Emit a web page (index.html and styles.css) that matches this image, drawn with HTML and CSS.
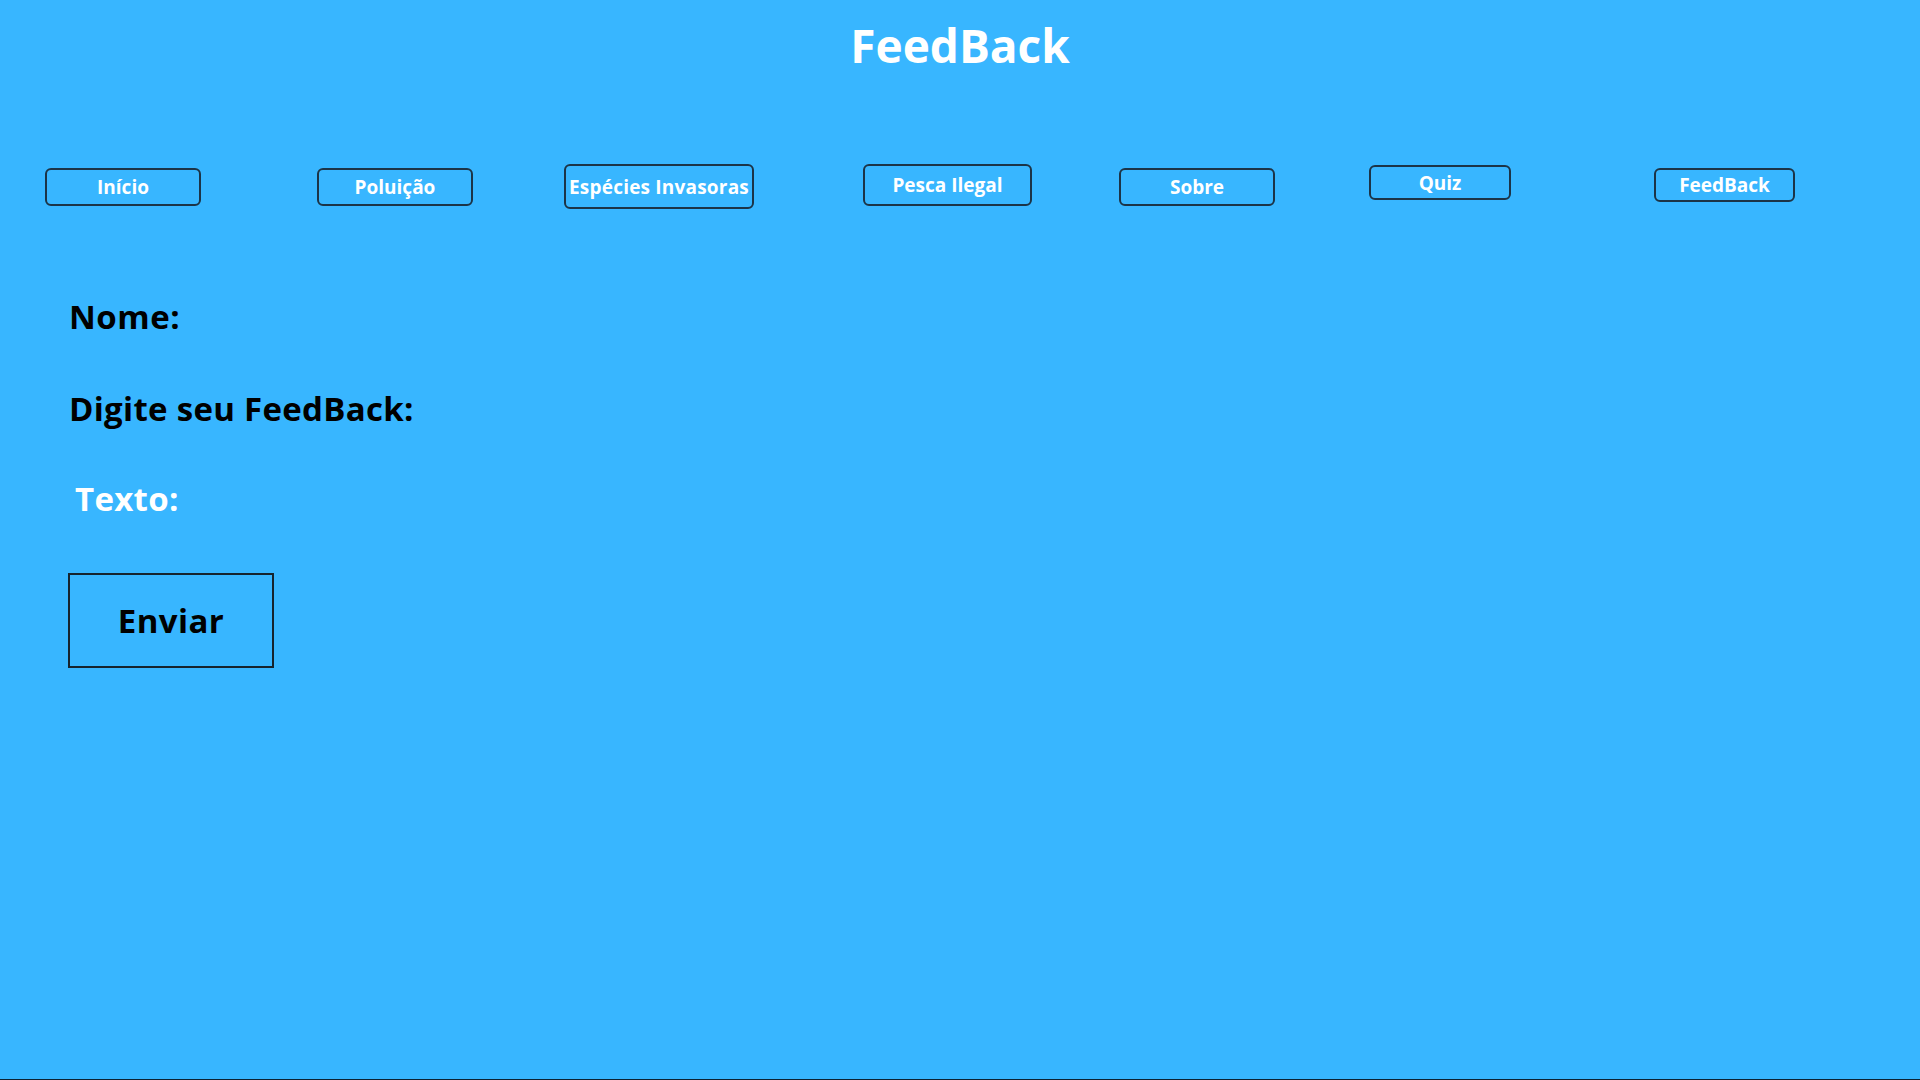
FILE: index.html
```html
<!DOCTYPE html>
<html lang="pt">
<head>
<meta charset="utf-8">
<title>FeedBack</title>
<link rel="stylesheet" href="styles.css">
</head>
<body>
<div class="page">
  <h1 class="title">FeedBack</h1>
  <nav class="nav">
    <a class="nav-btn b-inicio">Início</a>
    <a class="nav-btn b-poluicao">Poluição</a>
    <a class="nav-btn b-especies">Espécies Invasoras</a>
    <a class="nav-btn b-pesca">Pesca Ilegal</a>
    <a class="nav-btn b-sobre">Sobre</a>
    <a class="nav-btn b-quiz">Quiz</a>
    <a class="nav-btn b-feedback">FeedBack</a>
  </nav>
  <form class="form">
    <div class="label l-nome">Nome:</div>
    <div class="label l-digite">Digite seu FeedBack:</div>
    <div class="label l-texto">Texto:</div>
    <button type="button" class="send">Enviar</button>
  </form>
</div>
</body>
</html>
```
FILE: styles.css
```css
* { box-sizing: border-box; }
html, body { margin: 0; padding: 0; }
body {
  background: #38b6ff;
  font-family: "Open Sans", "Liberation Sans", sans-serif;
  font-weight: 700;
}
.page {
  width: 1920px;
  height: 1080px;
  border-bottom: 1px solid #0b2233;
  overflow: hidden;
}
.title {
  margin: 12px 0 0;
  font-size: 46px;
  line-height: 66px;
  font-weight: 700;
  color: #ffffff;
  text-align: center;
}
.nav {
  display: flex;
  align-items: flex-start;
  margin-top: 86px;
  padding-left: 45px;
}
.nav-btn {
  display: flex;
  align-items: center;
  justify-content: center;
  border: 2px solid #1c3447;
  border-radius: 6px;
  color: #ffffff;
  font-size: 19px;
  white-space: nowrap;
}
.b-inicio { width: 156px; height: 38px; margin-top: 4px; }
.b-poluicao { width: 156px; height: 38px; margin-top: 4px; margin-left: 116px; }
.b-especies { width: 190px; height: 45px; margin-left: 91px; letter-spacing: 0.2px; }
.b-pesca { width: 169px; height: 42px; margin-left: 109px; }
.b-sobre { width: 156px; height: 38px; margin-top: 4px; margin-left: 87px; }
.b-quiz { width: 142px; height: 35px; margin-top: 1px; margin-left: 94px; }
.b-feedback { width: 141px; height: 34px; margin-top: 4px; margin-left: 143px; }
.form {
  display: flex;
  flex-direction: column;
  align-items: flex-start;
  padding-left: 69px;
  margin-top: 85px;
}
.label {
  font-size: 33px;
  line-height: 46px;
  letter-spacing: 0.3px;
  color: #000000;
}
.l-nome { letter-spacing: 0.5px; }
.l-digite { margin-top: 46px; }
.l-texto { margin-top: 44px; margin-left: 6px; color: #ffffff; }
.send {
  margin-top: 51px;
  margin-left: -1px;
  width: 206px;
  height: 95px;
  background: transparent;
  border: 2px solid #16242e;
  border-radius: 0;
  font-family: "Open Sans", "Liberation Sans", sans-serif;
  font-weight: 700;
  font-size: 33px;
  letter-spacing: 0.4px;
  color: #000000;
  padding: 0;
}
```
